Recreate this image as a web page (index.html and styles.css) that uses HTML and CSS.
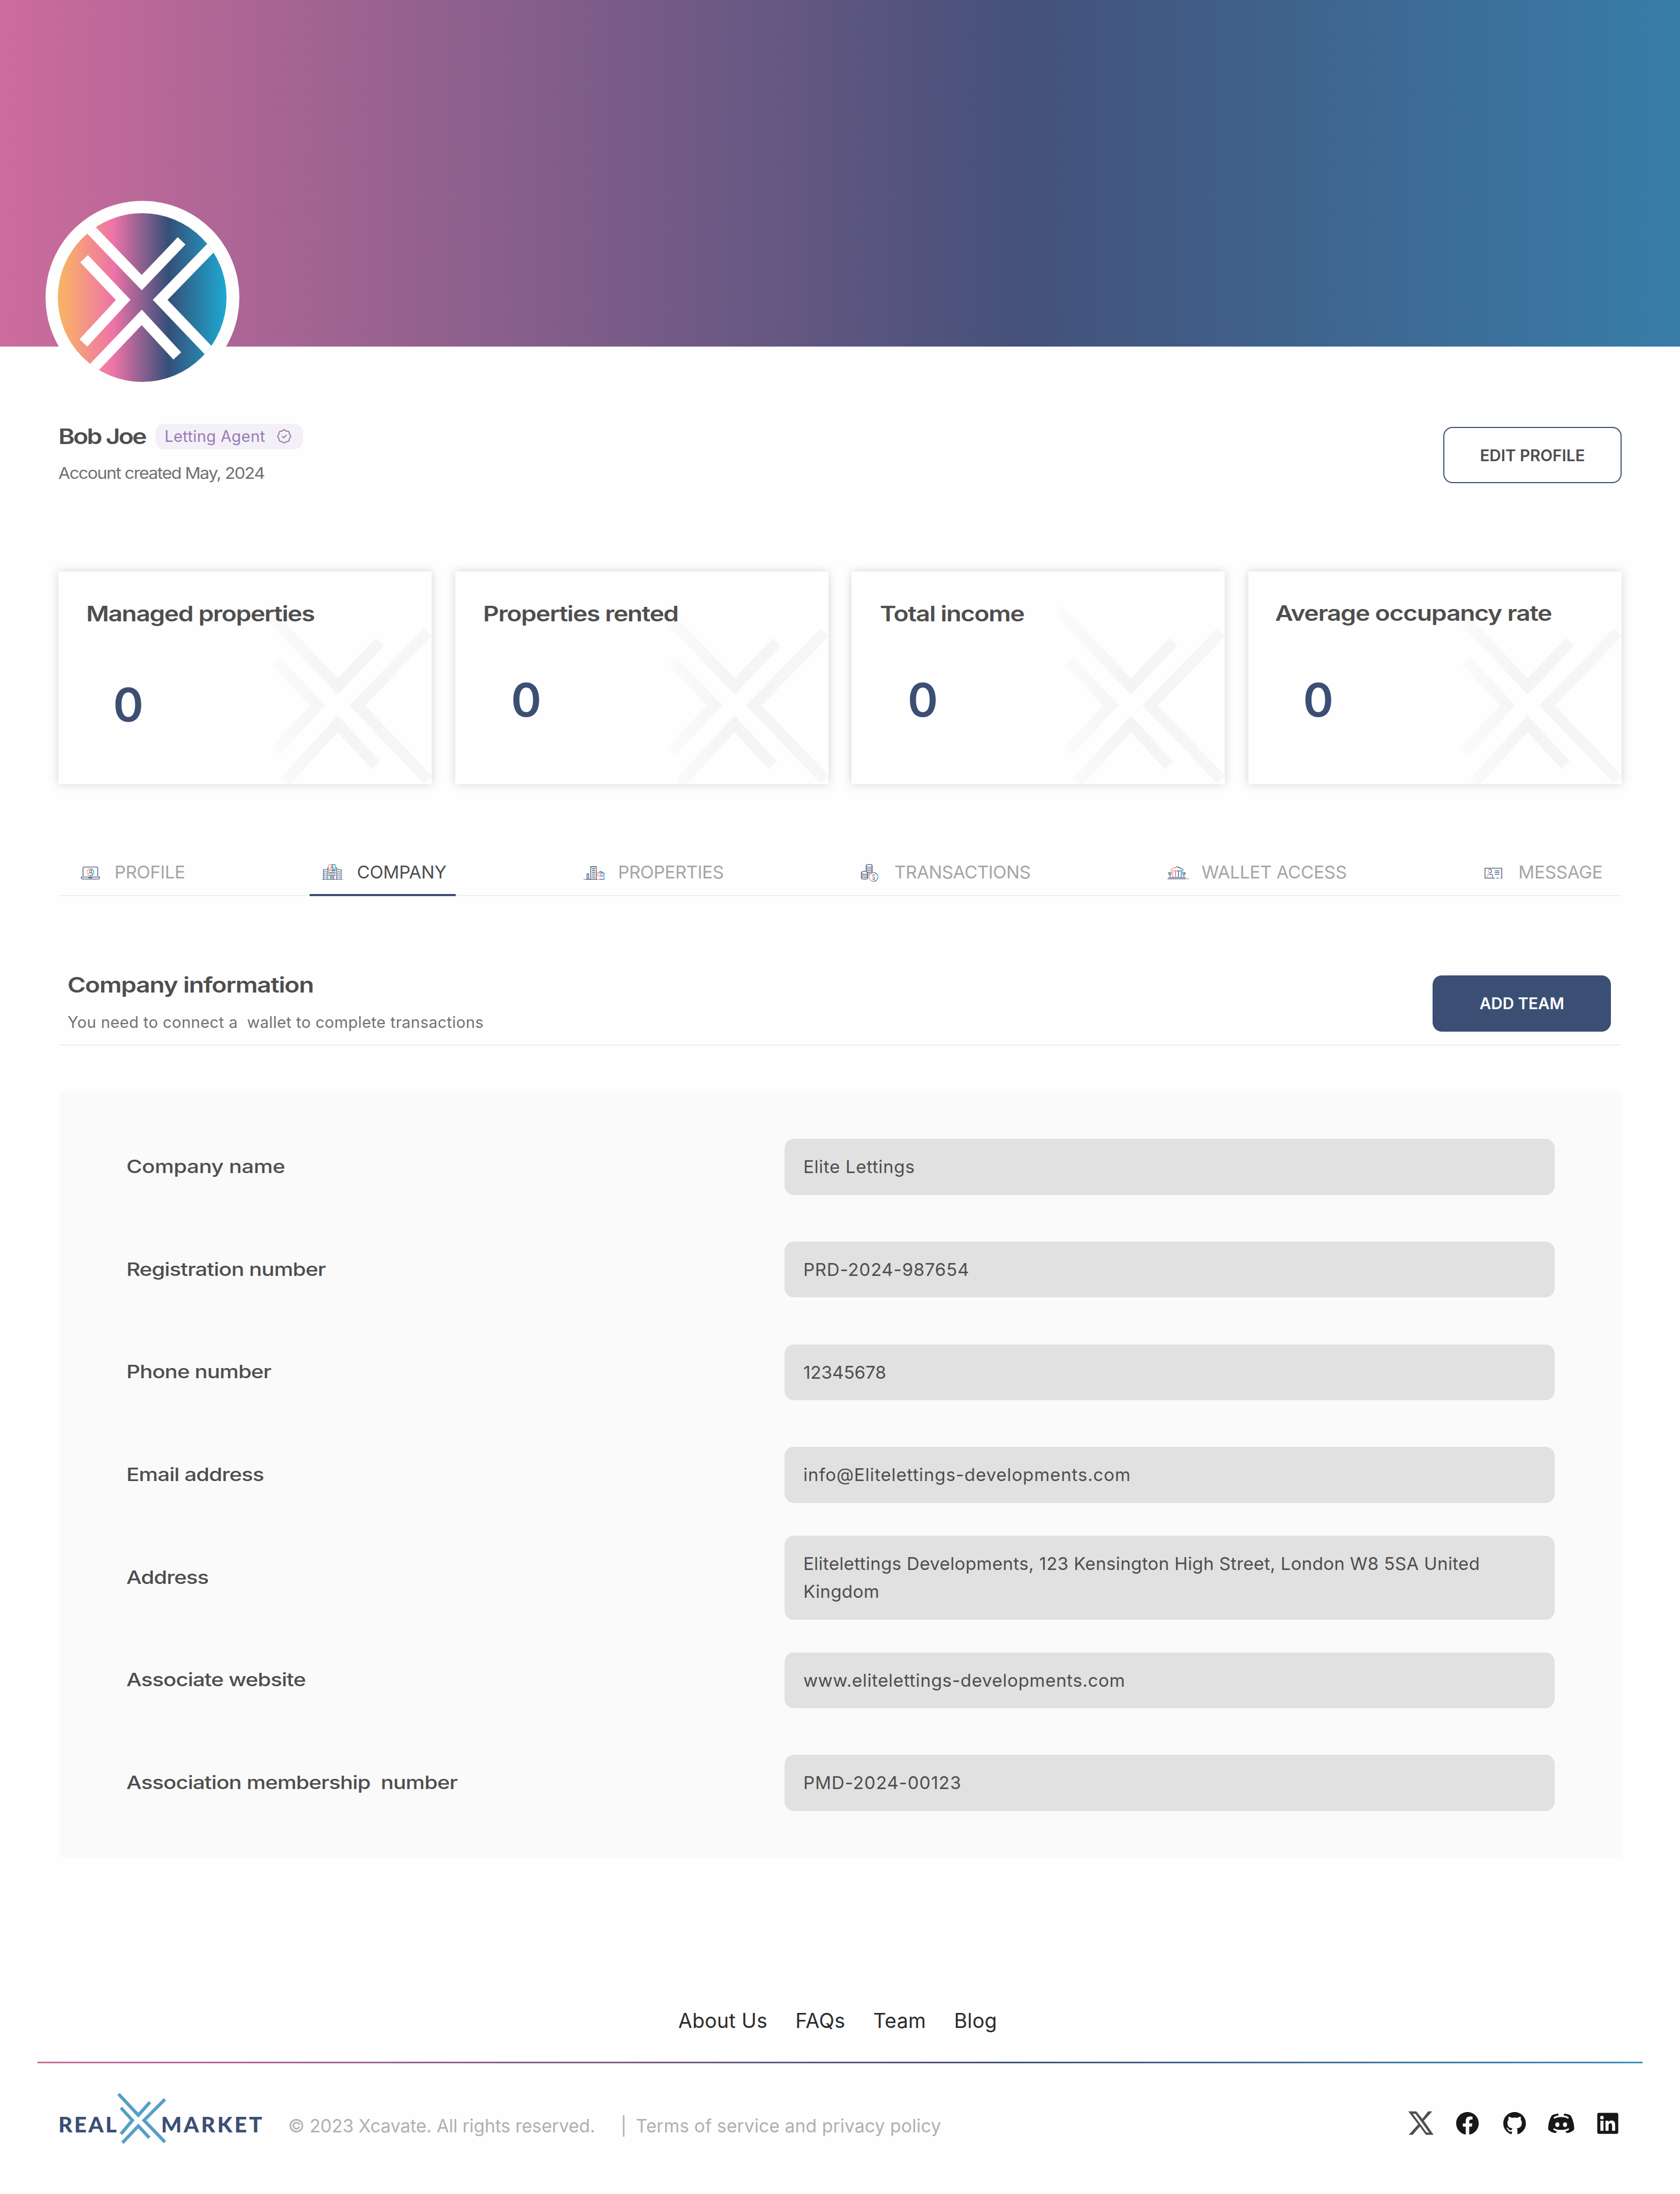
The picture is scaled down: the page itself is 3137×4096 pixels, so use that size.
FILE: index.html
```html
<!DOCTYPE html>
<html lang="en">
<head>
<meta charset="utf-8">
<title>RealXMarket – Company profile</title>
<link rel="stylesheet" href="styles.css">
</head>
<body>
<svg class="defs" aria-hidden="true">
  <defs>
    <linearGradient id="brand" x1="0" x2="1" y1="0" y2="0">
      <stop offset="0.03" stop-color="#f8b068"/><stop offset="0.33" stop-color="#ee73a8"/><stop offset="0.655" stop-color="#344f78"/><stop offset="1" stop-color="#1ea9d1"/>
    </linearGradient>
    <linearGradient id="mark" gradientUnits="userSpaceOnUse" x1="165" x2="320" y1="0" y2="0">
      <stop offset="0" stop-color="#fdfdfd"/><stop offset="0.48" stop-color="#f4f4f4"/><stop offset="1" stop-color="#f7f7f7"/>
    </linearGradient>
    <symbol id="watermark" viewBox="0 0 320 182">
      <g fill="none" stroke="url(#mark)" stroke-width="9.6" stroke-miterlimit="10">
        <path d="M177.7 33.5 239.4 98.5 275.7 60.3"/><path d="M186.4 76.6 222.2 114.7 185.7 154"/>
        <path d="M316.8 52 256 114.7 316.8 178.4"/><path d="M193.3 180.7 239.4 130.5 272 165.9"/>
      </g>
    </symbol>
  </defs>
</svg>

<header class="banner"></header>
<main class="page">
  <div class="avatar">
    <svg viewBox="0 0 144.6 144.6">
      <clipPath id="disc"><circle cx="72.3" cy="72.3" r="72.3"/></clipPath>
      <g clip-path="url(#disc)">
        <rect width="144.6" height="144.6" fill="url(#brand)"/>
        <g fill="none" stroke="#fff" stroke-width="9.1" stroke-miterlimit="10">
          <path d="M20 5.6 71.9 59.5 106.1 23.7"/><path d="M22.5 39 56 74.3 21.9 111.2"/>
          <path d="M141 19.5 87.7 74.3 139 128"/><path d="M22 141.7 71.9 89.3 102.4 122.3"/>
        </g>
      </g>
    </svg>
  </div>

  <section class="profile">
    <div>
      <div class="name-row">
        <h1 class="wide name">Bob Joe</h1>
        <span class="badge"><span class="badge-text">Letting Agent</span>
          <svg viewBox="2 2 20 20"><path d="M5 7.2A2.2 2.2 0 0 1 7.2 5h1a2.2 2.2 0 0 0 1.55-.64l.7-.7a2.2 2.2 0 0 1 3.12 0l.7.7c.412.41.97.64 1.55.64h1a2.2 2.2 0 0 1 2.2 2.2v1c0 .58.23 1.138.64 1.55l.7.7a2.2 2.2 0 0 1 0 3.12l-.7.7a2.2 2.2 0 0 0-.64 1.55v1a2.2 2.2 0 0 1-2.2 2.2h-1a2.2 2.2 0 0 0-1.55.64l-.7.7a2.2 2.2 0 0 1-3.12 0l-.7-.7a2.2 2.2 0 0 0-1.55-.64h-1a2.2 2.2 0 0 1-2.2-2.2v-1a2.2 2.2 0 0 0-.64-1.55l-.7-.7a2.2 2.2 0 0 1 0-3.12l.7-.7a2.2 2.2 0 0 0 .64-1.55zM9.3 12.2l1.9 1.8 3.6-3.6"/></svg>
        </span>
      </div>
      <p class="wide created">Account created May, 2024</p>
    </div>
    <button class="btn btn-outline">EDIT PROFILE</button>
  </section>

  <section class="cards">
    <article class="card first"><svg class="card-mark"><use href="#watermark"/></svg><h2 class="wide">Managed properties</h2><p class="count">0</p></article>
    <article class="card"><svg class="card-mark"><use href="#watermark"/></svg><h2 class="wide">Properties rented</h2><p class="count">0</p></article>
    <article class="card"><svg class="card-mark"><use href="#watermark"/></svg><h2 class="wide">Total income</h2><p class="count">0</p></article>
    <article class="card last"><svg class="card-mark"><use href="#watermark"/></svg><h2 class="wide">Average occupancy rate</h2><p class="count">0</p></article>
  </section>

  <nav class="tabs">
    <a class="tab t-profile">
      <svg viewBox="0 0 20 20"><g fill="none" stroke="#3b4f74" stroke-width=".6"><path d="M3.7 12.8V5.8q0-.9.9-.9h10.8q.9 0 .9.9v7M2.1 13.5h15.8q0 1.7-1.3 1.7H3.4q-1.3 0-1.3-1.7zM8.5 13.5q0 .7.6.7h1.8q.6 0 .6-.7"/></g><g fill="none" stroke="url(#brand)" stroke-width=".6"><circle cx="10" cy="9.4" r="2.9"/><circle cx="10" cy="8.7" r="1"/><path d="M8.2 11.3q0-1.6 1.8-1.6t1.8 1.6"/></g></svg>
      <span>PROFILE</span></a>
    <a class="tab t-company active">
      <svg viewBox="0 0 20 20"><g fill="none" stroke="#3b4f74" stroke-width=".55"><path d="M.8 15.5h16.4M17.8 15.5h.8M1.8 15.5V7h3.4M13.6 7H17v8.5M5.5 15.5V5.6h.8M12.2 5.6h1v9.9M7.7 15.5v-2.2h3v2.2M9.2 13.3v2.2M6.3 8.1h.9M8.7 8.1h3.6M6.3 9.5h6M6.3 10.8h6M6.3 12.1h6"/><path stroke-dasharray="1.1 .6" d="M2.9 8.3v6.6M4.3 8.3v6.6M14.4 8.3v6.6M15.8 8.3v6.6"/></g><g fill="none" stroke="url(#brand)" stroke-width=".6"><rect x="6.3" y="2.9" width="5.6" height="4.3"/><circle cx="9.1" cy="4.6" r=".8"/><path d="M7.8 6.7q0-1.2 1.3-1.2t1.3 1.2"/></g></svg>
      <span>COMPANY</span></a>
    <a class="tab t-properties">
      <svg viewBox="0 0 20 20"><path fill="none" stroke="#3b4f74" stroke-width=".6" d="M.9 15.4h.8M2.4 15.4h10.3M6.9 15.4V4.6h4.7v10.8M3.8 15.4v-4.7h1.3v4.7M8 6.2h2.5M8 7.8h2.5M8 9.4h2.5M8 11h2.5M8 12.6h2.5M8 14.1h2.5"/><path fill="none" stroke="url(#brand)" stroke-width=".65" d="M13.9 10v-.5q0-.7.7-.7h1.3q.7 0 .7.7v.5M12.2 10h6.2v1.2q-.5 1.5-2 1.5h-2.2q-1.5 0-2-1.5zM14.8 11.6h1.1M12.2 15.4h6.2V12.8"/></svg>
      <span>PROPERTIES</span></a>
    <a class="tab t-transactions">
      <svg viewBox="0 0 20 20"><g fill="none" stroke="#3b4f74" stroke-width=".55"><ellipse cx="8.7" cy="3.9" rx="2.6" ry="1.2"/><path d="M6.1 3.9v4.6M11.3 3.9v6M6.1 5.4q0 1.2 2.6 1.2t2.6-1.2M6.1 6.9q0 1.2 2.6 1.2t2.6-1.2M7.2 9.2q.6.3 1.5.3 2.6 0 2.6-1.2M8 10.9q2 0 3.3-1M8 12.4h1.2M8 13.9h.7"/><ellipse cx="4.7" cy="9.9" rx="2.7" ry="1.2"/><path d="M2 9.9v4.2q0 1.2 2.7 1.2t2.7-1.2V9.9M2 11.3q0 1.2 2.7 1.2t2.7-1.2M2 12.7q0 1.2 2.7 1.2t2.7-1.2"/></g><g fill="none" stroke="url(#brand)" stroke-width=".6"><circle cx="12.4" cy="13.4" r="3.8"/><path d="M13.5 12.3q0-.9-1.1-.9t-1.1.9q0 .8 1.1 1.1t1.1 1.1q0 .9-1.1.9t-1.1-.9M12.4 10.8v.6M12.4 15.4v.7"/></g></svg>
      <span>TRANSACTIONS</span></a>
    <a class="tab t-wallet">
      <svg viewBox="0 0 20 20"><path fill="none" stroke="#3b4f74" stroke-width=".6" d="M2.2 13.8h14.6M1.4 15h16.2M18.5 15h.9M5 9.7H2.5v1.3H5M3.6 11v2.1M13.9 9.7h2.5v1.3h-2.5M15.4 11v2.1"/><path fill="none" stroke="url(#brand)" stroke-width=".65" d="M9.5 4.6 14.6 6.9v1.3H4.4V6.9zM5.9 8.2v5M8.3 8.2v5M10.8 8.2v5M13.2 8.2v5"/></svg>
      <span>WALLET ACCESS</span></a>
    <a class="tab t-message">
      <svg viewBox="0 0 20 20"><path fill="none" stroke="#3b4f74" stroke-width=".6" d="M10.2 14.4H1.8V5.9h14.4v8.5h-1.2M11.6 14.4h1.8M10.2 8.1h4M10.2 9.5h4M10.2 11.1h4"/><g fill="none" stroke="url(#brand)" stroke-width=".65"><circle cx="6" cy="8.3" r="1.4"/><path d="M3.7 14.2v-1.7q0-1.5 2.3-1.5t2.3 1.5v1.7"/></g></svg>
      <span>MESSAGE</span></a>
  </nav>

  <section class="section-head">
    <div>
      <h2 class="wide">Company information</h2>
      <p>You need to connect a&nbsp; wallet to complete transactions</p>
    </div>
    <button class="btn btn-solid">ADD TEAM</button>
  </section>

  <section class="panel">
    <div class="row"><label class="wide label-company">Company name</label><div class="field f-name">Elite Lettings</div></div>
    <div class="row"><label class="wide">Registration number</label><div class="field f-registration">PRD-2024-987654</div></div>
    <div class="row"><label class="wide">Phone number</label><div class="field f-phone">12345678</div></div>
    <div class="row"><label class="wide">Email address</label><div class="field f-email">info@Elitelettings-developments.com</div></div>
    <div class="row"><label class="wide">Address</label><div class="field f-address">Elitelettings Developments, 123 Kensington High Street, London W8 5SA United<br>Kingdom</div></div>
    <div class="row"><label class="wide">Associate website</label><div class="field f-website">www.elitelettings-developments.com</div></div>
    <div class="row"><label class="wide">Association membership&nbsp; number</label><div class="field f-membership">PMD-2024-00123</div></div>
  </section>
</main>

<footer class="footer">
  <nav class="links"><a>About Us</a><a>FAQs</a><a>Team</a><a>Blog</a></nav>
  <div class="rule"></div>
  <div class="bottom">
    <div class="logo">
      <span class="logo-real">REAL</span>
      <svg viewBox="100 1792 43 46"><g fill="none" stroke="#569fc6" stroke-width="2.8" stroke-miterlimit="10"><path d="M101.5 1794.4 118.5 1812.6 128.5 1801.4"/><path d="M103.6 1806.2 113.4 1817 103.6 1828.7"/><path d="M141.3 1799 123.4 1817 141.3 1835.7"/><path d="M104.9 1836.2 118.5 1821.8 127.9 1832"/></g></svg>
      <span class="logo-market">MARKET</span>
    </div>
    <span class="copy">© 2023 Xcavate. All rights reserved.</span>
    <span class="bar">|</span>
    <span class="terms">Terms of service and privacy policy</span>
    <div class="social">
      <svg viewBox="0 0 24 24"><path fill="#4e4e4e" fill-rule="evenodd" d="M1.2 1.75H8.05L13.25 8.1 18.2 1.75H21.7L14.5 9.75 22.9 21.75H16.3L11.1 14.7 5 21.75H1.6L9.7 12.8ZM5 3.8 16.9 19.9H19.1L7.4 3.8Z"/></svg>
      <svg viewBox="-.4 -.4 24.8 24.8"><path d="M12 2C6.477 2 2 6.477 2 12c0 4.991 3.657 9.128 8.438 9.879V14.89h-2.54V12h2.54V9.797c0-2.506 1.492-3.89 3.777-3.89 1.094 0 2.238.195 2.238.195v2.46h-1.26c-1.243 0-1.63.771-1.63 1.562V12h2.773l-.443 2.89h-2.33v6.989C18.343 21.129 22 16.99 22 12c0-5.523-4.477-10-10-10z"/></svg>
      <svg viewBox="-.4 -.4 24.8 24.8"><path d="M12 2C6.475 2 2 6.475 2 12a9.994 9.994 0 0 0 6.838 9.488c.5.087.687-.213.687-.476 0-.237-.013-1.024-.013-1.862-2.512.463-3.162-.612-3.362-1.175-.113-.288-.6-1.175-1.025-1.413-.35-.187-.85-.65-.013-.662.788-.013 1.35.725 1.538 1.025.9 1.512 2.338 1.087 2.912.825.088-.65.35-1.087.638-1.337-2.225-.25-4.55-1.113-4.55-4.938 0-1.088.387-1.987 1.025-2.688-.1-.25-.45-1.275.1-2.65 0 0 .837-.262 2.75 1.026a9.28 9.28 0 0 1 2.5-.338c.85 0 1.7.112 2.5.337 1.912-1.3 2.75-1.024 2.75-1.024.55 1.375.2 2.4.1 2.65.637.7 1.025 1.587 1.025 2.687 0 3.838-2.337 4.688-4.562 4.938.362.312.675.912.675 1.85 0 1.337-.013 2.412-.013 2.75 0 .262.188.574.688.474A10.016 10.016 0 0 0 22 12c0-5.525-4.475-10-10-10z"/></svg>
      <svg viewBox="0 0 24 24"><path d="M9.4 3.6C7 3.9 5 4.6 3.9 5.3 2.2 8 .8 12.5.8 17c1.4 2 3.7 3.1 6.5 3.3l1.1-1.5h7.2l1.1 1.5c2.8-.2 5.1-1.3 6.5-3.3 0-4.5-1.4-9-3.1-11.7-1.1-.7-3.1-1.4-5.5-1.7L14.1 5H9.9z"/><g fill="none" stroke="#fff" stroke-width="1.5" stroke-linecap="round"><path d="M6.3 7.2C9 5.3 15 5.3 17.7 7.2"/><path d="M6 17c3 1.8 9 1.8 12 0"/></g><path fill="#fff" d="M9.9 3.9h4.2v1.8H9.9zM8.6 18.2h6.8v1.2H8.6z"/><ellipse fill="#fff" cx="8.7" cy="13.1" rx="1.75" ry="2"/><ellipse fill="#fff" cx="15.3" cy="13.1" rx="1.75" ry="2"/></svg>
      <svg viewBox="0 0 24 24"><path d="M18.335 18.339H15.67v-4.177c0-.996-.02-2.278-1.39-2.278-1.389 0-1.601 1.084-1.601 2.205v4.25h-2.666V9.75h2.56v1.17h.035c.358-.674 1.228-1.387 2.528-1.387 2.7 0 3.2 1.778 3.2 4.091v4.715zM7.003 8.575a1.546 1.546 0 0 1-1.548-1.549 1.548 1.548 0 1 1 1.547 1.549zm1.336 9.764H5.666V9.75H8.34v8.589zM19.67 3H4.329C3.593 3 3 3.58 3 4.297v15.406C3 20.42 3.594 21 4.328 21h15.338C20.4 21 21 20.42 21 19.703V4.297C21 3.58 20.4 3 19.666 3h.003z"/></svg>
    </div>
  </div>
</footer>
</body>
</html>
```
FILE: styles.css
```css
/* 1rem = 10 units of the 1440-unit wide layout */
html { font-size: calc(100vw / 144); }
* { box-sizing: border-box; margin: 0; padding: 0; }
body { background: #fefefe; color: #4e4e4e; font-family: Inter, "Liberation Sans", sans-serif; font-size: 1.54rem; overflow: hidden; }
.defs { position: absolute; width: 0; height: 0; }
svg { display: block; flex: none; }
/* extended grotesque look for headings and labels */
.wide { transform: scaleX(1.18); transform-origin: left center; white-space: nowrap; width: max-content; }

.banner { height: 29.7rem; background: linear-gradient(90deg, #cc6c9d 0%, #44517a 61%, #377da8 100%); }
.page { padding: 0 5rem; }
.avatar { width: 16.6rem; height: 16.6rem; margin: -12.5rem 0 0 -1.1rem; padding: 1.07rem; border-radius: 50%; background: #fefefe; position: relative; }
.avatar svg { width: 14.46rem; height: 14.46rem; }

.profile { display: flex; justify-content: space-between; align-items: flex-start; height: 15.2rem; padding-top: 2.5rem; }
.name-row { display: flex; align-items: center; height: 2.2rem; }
.name { width: 8.3rem; font-size: 1.8rem; font-weight: 600; line-height: 2.2rem; letter-spacing: -.105rem; }
.badge { display: flex; align-items: center; justify-content: space-between; width: 12.7rem; height: 2.2rem; padding: 0 1rem 0 .8rem; border-radius: .8rem; background: #f3f1f7; color: #9a7bb5; font-size: 1.34rem; letter-spacing: .014rem; }
.badge svg { width: 1.25rem; height: 1.25rem; fill: none; stroke: currentColor; stroke-width: 1.5; stroke-linejoin: round; stroke-linecap: round; }
.created { margin-top: 1.05rem; font-size: 1.37rem; line-height: 2rem; letter-spacing: -.065rem; color: #717171; transform: scaleX(1.08); }

.btn { width: 15.3rem; height: 4.8rem; border-radius: .8rem; font: 600 1.36rem Inter, sans-serif; }
.btn-outline { margin-top: .3rem; border: .1rem solid #3b4f74; background: #fefefe; color: #4e4e4e; }
.btn-solid { border: 0; background: #3b4f74; color: #fff; }

.cards { display: grid; grid-template-columns: repeat(4, 1fr); gap: 2rem; }
.card { display: grid; height: 18.2rem; overflow: hidden; background: #fefefe; box-shadow: 0 0 .8rem rgba(0, 0, 0, .17); grid-template-rows: 100%; align-content: start; }
.card > * { grid-area: 1 / 1; }
.card-mark { width: 32rem; height: 18.2rem; }
.card h2 { margin: 2.5rem 0 0 2.4rem; font-size: 1.8rem; font-weight: 600; line-height: 2.2rem; letter-spacing: -.056rem; }
.card .count { margin: 8.6rem 0 0 4.8rem; color: #3b4f74; font-size: 3.95rem; font-weight: 600; line-height: 4.8rem; }
.card.first .count { margin: 9rem 0 0 4.7rem; }
.card.last .count { margin-left: 4.7rem; }
.card.last h2 { margin: 2.44rem 0 0 2.3rem; letter-spacing: -.049rem; }

.tabs { display: flex; justify-content: space-between; height: 4.15rem; margin-top: 5.45rem; padding: 0 .85rem 0 .76rem; border-bottom: .1rem solid #eee; color: #a5a5a5; font-size: 1.52rem; letter-spacing: -.02rem; }
.tab { display: flex; align-items: center; gap: 1.05rem; height: 4.15rem; padding: .2rem 0 0 1rem; border-bottom: .2rem solid transparent; white-space: nowrap; }
.tab svg { width: 2rem; height: 2rem; margin-top: .14rem; }
.tab.active { border-color: #3b4f74; color: #4e4e4e; letter-spacing: -.01rem; }
.t-profile { width: 10.92rem; }
.t-company { width: 12.51rem; }
.t-properties { width: 13.82rem; }
.t-transactions { width: 16.45rem; }
.t-wallet { width: 17.3rem; letter-spacing: -.01rem; }
.t-message { width: 12.05rem; letter-spacing: -.01rem; }

.section-head { display: flex; justify-content: space-between; align-items: flex-start; height: 12.8rem; padding: 6.8rem .9rem 0 .8rem; border-bottom: .1rem solid #eee; }
.section-head h2 { margin-top: -.3rem; font-size: 1.8rem; font-weight: 600; line-height: 2.2rem; letter-spacing: -.05rem; }
.section-head p { margin-top: 1.1rem; font-size: 1.34rem; line-height: 2rem; letter-spacing: .018rem; color: #717171; }

.panel { display: grid; gap: 4rem; margin: 4rem 0 0 .1rem; padding: 4rem 5.75rem; background: #fafafa; }
.row { display: flex; justify-content: space-between; align-items: center; height: 4.8rem; }
.row label { padding-bottom: .1rem; font-size: 1.58rem; font-weight: 500; letter-spacing: -.036rem; transform: scaleX(1.17); }
.row .label-company { letter-spacing: -.018rem; }
.field { width: 66rem; padding: 1.2rem 1.6rem; border-radius: .8rem; background: #e1e1e1; font-size: 1.52rem; line-height: 2.4rem; white-space: nowrap; }
.f-name { letter-spacing: .03rem; }
.f-registration { letter-spacing: .034rem; }
.f-email { letter-spacing: .038rem; }
.f-address { letter-spacing: .015rem; }
.f-website { letter-spacing: .029rem; }
.f-membership { letter-spacing: .043rem; }

.footer { padding-top: 12.6rem; }
.links { display: flex; justify-content: center; gap: 2.4rem; height: 2.8rem; margin-right: .4rem; color: #2b2b2b; font-size: 1.72rem; line-height: 2.8rem; letter-spacing: .015rem; }
.rule { height: .13rem; margin: 2.1rem 3.2rem 0; background: linear-gradient(90deg, #cc6c9d 0%, #44517a 61%, #3c8fb8 100%); }
.bottom { display: flex; align-items: center; height: 4.6rem; margin-top: 2.4rem; padding: 0 5rem; color: #b0b0b0; font-size: 1.54rem; }
.logo { display: flex; align-items: center; width: 17.5rem; color: #3b4f74; font-family: Lato, sans-serif; font-size: 1.86rem; font-weight: 900; }
.logo svg { width: 4.3rem; height: 4.6rem; margin-right: -.5rem; }
.logo span { padding-top: 1rem; white-space: nowrap; }
.logo-real { width: 5rem; letter-spacing: .15rem; }
.logo-market { letter-spacing: .18rem; }
.copy, .bar, .terms { padding-top: 1.3rem; white-space: nowrap; }
.copy { width: 28.5rem; margin-left: 2.2rem; letter-spacing: -.005rem; }
.bar { width: 1.3rem; }
.terms { letter-spacing: .007rem; }
.social { display: flex; gap: 1.6rem; margin: .9rem 0 0 auto; }
.social svg { width: 2.4rem; height: 2.4rem; fill: #17181a; }
```
